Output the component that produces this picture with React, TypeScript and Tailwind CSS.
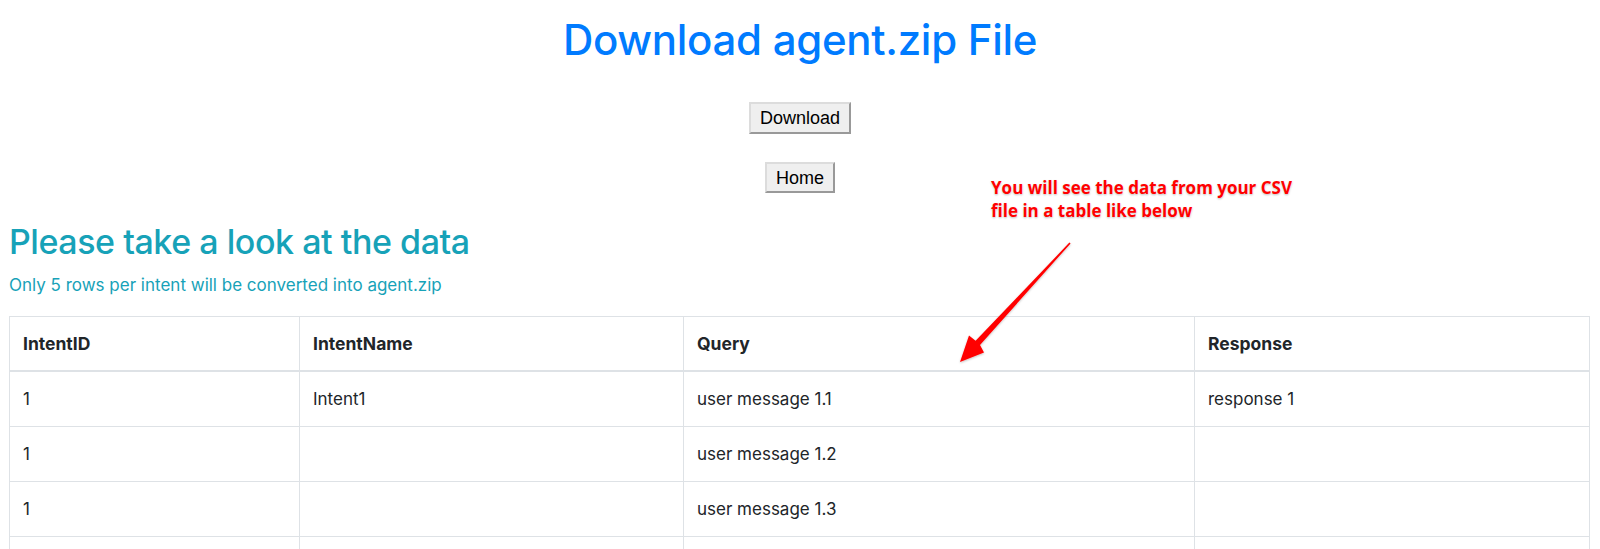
import * as React from 'react'

const rows = [
	{ id: '1', name: 'Intent1', query: 'user message 1.1', response: 'response 1' },
	{ id: '1', name: '', query: 'user message 1.2', response: '' },
	{ id: '1', name: '', query: 'user message 1.3', response: '' },
	{ id: '1', name: '', query: 'user message 1.4', response: '' },
]

function Arrow() {
	// skitch style arrow, page coordinates
	return (
		<svg className="absolute left-0 top-0 pointer-events-none" width="1600" height="549" viewBox="0 0 1600 549">
			<defs>
				<filter id="sh" x="-20%" y="-20%" width="140%" height="140%">
					<feDropShadow dx="0" dy="1" stdDeviation="1" floodColor="#000" floodOpacity="0.25" />
				</filter>
			</defs>
			<polygon
				filter="url(#sh)"
				fill="#ff0000"
				points="1070.6,243.4 980.0,345.0 984.0,352.5 960,362 969.0,335.5 975.6,340.8 1069.4,242.6"
			/>
		</svg>
	)
}

export default function App() {
	return (
		<div className="relative w-[1600px] h-[549px] overflow-hidden bg-white font-['Inter',sans-serif] text-[#212529]">
			<div className="flex flex-col items-center">
				<h1 className="mt-[14px] text-[42px] leading-[52px] font-medium text-[#007bff] tracking-[-0.3px]">
					Download agent.zip File
				</h1>
				<button className="mt-[36px] h-[32px] px-[9px] bg-[#efefef] border-2 border-t-[#dcdcdc] border-l-[#dcdcdc] border-r-[#999] border-b-[#999] font-['Liberation_Sans',sans-serif] text-[18px] leading-none text-black">
					Download
				</button>
				<button className="mt-[28px] h-[31px] px-[9px] bg-[#efefef] border-2 border-t-[#dcdcdc] border-l-[#dcdcdc] border-r-[#999] border-b-[#999] font-['Liberation_Sans',sans-serif] text-[18px] leading-none text-black">
					Home
				</button>
			</div>
			<div className="px-[9px]">
				<h2 className="mt-[28px] text-[34px] leading-[42px] font-medium text-[#17a2b8] tracking-[-0.45px]">
					Please take a look at the data
				</h2>
				<p className="mt-[10px] text-[17px] leading-[24px] text-[#17a2b8]">
					Only 5 rows per intent will be converted into agent.zip
				</p>
				<table className="mt-[19px] w-[1581px] table-fixed border-collapse text-[17px] leading-[26px]">
					<colgroup>
						<col className="w-[290px]" />
						<col className="w-[384px]" />
						<col className="w-[511px]" />
						<col />
					</colgroup>
					<thead>
						<tr>
							{['IntentID', 'IntentName', 'Query', 'Response'].map((h) => (
								<th
									key={h}
									className="border border-[#dee2e6] border-b-2 px-[13px] pt-[14px] pb-[13px] text-left text-[17.5px] font-bold"
								>
									{h}
								</th>
							))}
						</tr>
					</thead>
					<tbody>
						{rows.map((r, i) => (
							<tr key={i}>
								<td className="border border-[#dee2e6] px-[13px] py-[14px]">{r.id}</td>
								<td className="border border-[#dee2e6] px-[13px] py-[14px]">{r.name}</td>
								<td className="border border-[#dee2e6] px-[13px] py-[14px]">{r.query}</td>
								<td className="border border-[#dee2e6] px-[13px] py-[14px]">{r.response}</td>
							</tr>
						))}
					</tbody>
				</table>
			</div>
			<div className="absolute left-[991px] top-[176px] font-['Open_Sans',sans-serif] font-bold text-[17px] leading-[23px] text-[#ff0000] [text-shadow:0_0_2px_#fff,0_1px_2px_rgba(0,0,0,0.3)]">
				You will see the data from your CSV
				<br />
				file in a table like below
			</div>
			<Arrow />
		</div>
	)
}
